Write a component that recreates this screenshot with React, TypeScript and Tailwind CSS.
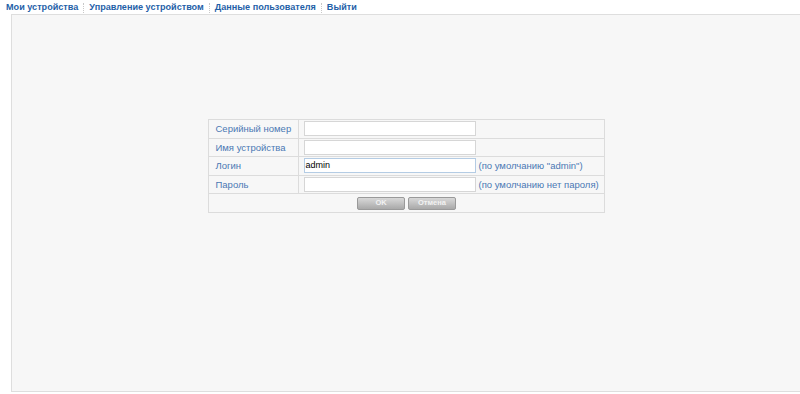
import React from "react";

const navItems = ["Мои устройства", "Управление устройством", "Данные пользователя", "Выйти"];

const rows = [
  { label: "Серийный номер", value: "", hint: "" },
  { label: "Имя устройства", value: "", hint: "" },
  { label: "Логин", value: "admin", hint: '(по умолчанию "admin")', focus: true },
  { label: "Пароль", value: "", hint: "(по умолчанию нет пароля)" },
];

export default function App() {
  return (
    <div className="w-[800px] h-[394px] overflow-hidden bg-white font-['Liberation_Sans',Arial,sans-serif] flex flex-col">
      <nav className="flex items-center h-[14px] pl-[6px] pt-[1px]">
        {navItems.map((item, i) => (
          <div key={item} className="flex items-center">
            {i > 0 && <span className="mx-[5px] h-[10px] border-l border-dotted border-[#c8c8c8]" />}
            <a className="text-[9.1px] font-bold text-[#1f5fa8] leading-none">{item}</a>
          </div>
        ))}
      </nav>

      <main className="ml-[11px] flex-1 mb-[2px] bg-[#f7f7f7] border border-r-0 border-[#dedede] flex justify-center pt-[104px]">
        <div>
          <table className="table-fixed w-[397px] border-collapse border border-[#dcdcdc] text-[9.5px] text-[#4a78b4]">
            <tbody>
              {rows.map((r) => (
                <tr key={r.label} className="h-[18.5px]">
                  <td className="w-[90px] border border-[#dcdcdc] pl-[7px] pr-0 py-0 leading-none whitespace-nowrap">{r.label}</td>
                  <td className="border border-[#dcdcdc] pl-[5px] py-0">
                    <div className="flex items-center gap-[3px]">
                      <div
                        className={`w-[172px] h-[15px] bg-white border flex items-center px-[1px] text-[9px] text-black ${
                          r.focus ? "border-[#b4cce4]" : "border-[#d6d6d6]"
                        }`}
                      >
                        {r.value}
                      </div>
                      {r.hint && <span className="whitespace-nowrap leading-none">{r.hint}</span>}
                    </div>
                  </td>
                </tr>
              ))}
              <tr className="h-[19px]">
                <td colSpan={2} className="border border-[#dcdcdc] p-0">
                  <div className="flex justify-center gap-[3px] ml-[1px]">
                    <button className="w-[48px] h-[13px] rounded-[2px] bg-gradient-to-b from-[#d9d9d9] to-[#a9a9a9] border border-[#9a9a9a] text-[7.5px] font-bold text-[#f2f2f2] leading-none">
                      OK
                    </button>
                    <button className="w-[48px] h-[13px] rounded-[2px] bg-gradient-to-b from-[#d9d9d9] to-[#a9a9a9] border border-[#9a9a9a] text-[7.5px] font-bold text-[#f2f2f2] leading-none">
                      Отмена
                    </button>
                  </div>
                </td>
              </tr>
            </tbody>
          </table>
        </div>
      </main>
    </div>
  );
}
